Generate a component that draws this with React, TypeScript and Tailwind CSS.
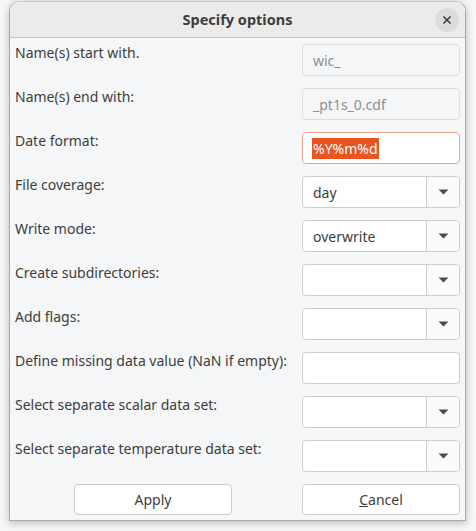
import React from "react";

const font = { fontFamily: '"Noto Sans", "Open Sans", sans-serif' };

function Arrow() {
  return (
    <svg width="11" height="6" viewBox="0 0 11 6">
      <path d="M0.5 0.5 L10.5 0.5 L5.5 5.5 Z" fill="#4a4a4a" />
    </svg>
  );
}

function Combo({ value }: { value?: string }) {
  return (
    <div className="flex h-[32px] w-[158px] rounded-[4px] border border-[#cdcdcd] bg-white overflow-hidden">
      <div className="flex flex-1 items-center pl-[10px] text-[14px] text-[#3d3d3d]">{value}</div>
      <div className="flex w-[33px] items-center justify-center border-l border-[#cdcdcd] bg-[#fafafa]">
        <Arrow />
      </div>
    </div>
  );
}

function Entry({ value, disabled }: { value?: string; disabled?: boolean }) {
  return (
    <div
      className={
        "flex h-[32px] w-[158px] items-center rounded-[4px] border pl-[10px] text-[14px] " +
        (disabled ? "border-[#dedede] bg-[#f5f6f7] text-[#8e8e8e]" : "border-[#cdcdcd] bg-white text-[#3d3d3d]")
      }
    >
      {value}
    </div>
  );
}

function Row({ label, children }: { label: string; children: React.ReactNode }) {
  return (
    <div className="flex h-[32px] items-start justify-between">
      <div className="text-[14px] leading-[18px] text-[#3d3d3d]">{label}</div>
      {children}
    </div>
  );
}

export default function App() {
  return (
    <div className="h-[531px] w-[476px] bg-[#f7f7f7] pl-[9px] pt-[1px]" style={font}>
      <div className="flex h-[520px] w-[457px] flex-col rounded-t-[10px] border border-[#a9a9a9] border-t-[#c8c8c8] bg-[#f5f6f7] shadow-[0_2px_8px_rgba(0,0,0,0.25)] overflow-hidden">
        <div className="relative flex h-[36px] items-center justify-center border-b border-[#c4c4c4] bg-[#ebebeb]">
          <span className="text-[14.5px] font-bold text-[#3d3d3d]">Specify options</span>
          <div className="absolute right-[6px] top-[6px] flex h-[24px] w-[24px] items-center justify-center rounded-full bg-[#dcdcdc]">
            <svg width="10" height="10" viewBox="0 0 10 10">
              <path d="M1.5 1.5 L8.5 8.5 M8.5 1.5 L1.5 8.5" stroke="#3d3d3d" strokeWidth="1.6" />
            </svg>
          </div>
        </div>
        <div className="flex flex-1 flex-col gap-[12px] pl-[5px] pr-[5px] pt-[6px]">
          <Row label="Name(s) start with.">
            <Entry value="wic_" disabled />
          </Row>
          <Row label="Name(s) end with:">
            <Entry value="_pt1s_0.cdf" disabled />
          </Row>
          <Row label="Date format:">
            <div className="flex h-[32px] w-[158px] items-center rounded-[4px] border border-[#f2a48c] bg-white pl-[9px] text-[14px]">
              <span className="bg-[#e95420] px-[1px] leading-[21px] text-white">%Y%m%d</span>
            </div>
          </Row>
          <Row label="File coverage:">
            <Combo value="day" />
          </Row>
          <Row label="Write mode:">
            <Combo value="overwrite" />
          </Row>
          <Row label="Create subdirectories:">
            <Combo />
          </Row>
          <Row label="Add flags:">
            <Combo />
          </Row>
          <Row label="Define missing data value (NaN if empty):">
            <Entry />
          </Row>
          <Row label="Select separate scalar data set:">
            <Combo />
          </Row>
          <Row label="Select separate temperature data set:">
            <Combo />
          </Row>
          <div className="flex justify-between pl-[59px]">
            <button className="h-[31px] w-[158px] rounded-[4px] border border-[#cdcdcd] bg-white text-[14px] text-[#3d3d3d]">
              Apply
            </button>
            <button className="h-[31px] w-[158px] rounded-[4px] border border-[#cdcdcd] bg-white text-[14px] text-[#3d3d3d]">
              <span className="underline">C</span>ancel
            </button>
          </div>
        </div>
      </div>
    </div>
  );
}
